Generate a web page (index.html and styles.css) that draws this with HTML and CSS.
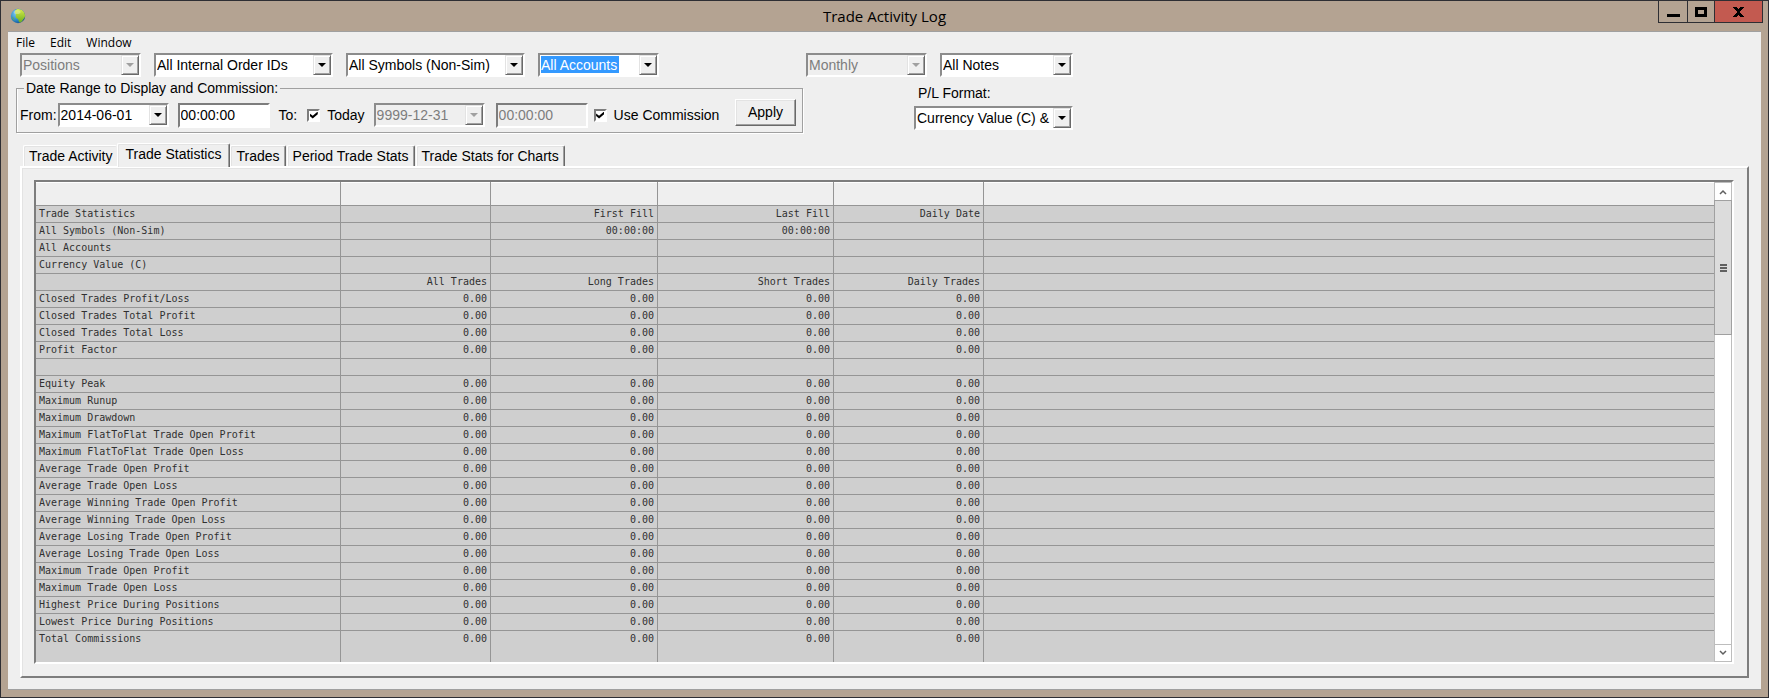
FILE: index.html
```
<!DOCTYPE html>
<html lang="en">
<head>
<meta charset="utf-8">
<title>Trade Activity Log</title>
<link rel="stylesheet" href="styles.css">
</head>
<body>
<div class="window">
  <header class="titlebar">
    <svg class="app-icon" width="16" height="16" viewBox="0 0 16 16" aria-hidden="true">
      <defs>
        <radialGradient id="sea" cx="0.35" cy="0.35" r="0.75">
          <stop offset="0" stop-color="#7cc8ee"/><stop offset="0.6" stop-color="#2a86c8"/><stop offset="1" stop-color="#164d86"/>
        </radialGradient>
        <linearGradient id="land" x1="0" y1="0" x2="0" y2="1">
          <stop offset="0" stop-color="#d6ea4a"/><stop offset="1" stop-color="#6fb01e"/>
        </linearGradient>
      </defs>
      <circle cx="8" cy="8" r="7.2" fill="url(#sea)"/>
      <path d="M7 1.2C11 .4 14.8 3.600 15.100 7.500C15.300 9.500 13.600 10.300 12.600 12.200C11.900 13.800 10.300 14.800 9.300 14C8.300 13.200 8.800 11.600 7.600 10.800C6.200 10 5.200 9 5.800 7.400C6.400 6 5 5.600 4.900 4.200C4.900 2.800 5.700 1.500 7 1.200Z" fill="url(#land)"/>
      <path d="M2.200 8.500C3.500 9.200 4.400 10.500 4.600 12.800C3.300 12 2.300 10.500 2.200 8.500Z" fill="#5fae5a"/>
      <ellipse cx="7" cy="4" rx="3.500" ry="2" fill="#fff" opacity="0.3"/>
    </svg>
    <h1 class="title">Trade Activity Log</h1>
    <div class="window-buttons">
      <button class="wb wb-min" type="button" aria-label="Minimize"><svg width="13" height="10" viewBox="0 0 13 10"><path d="M0 7h13v3H0z"/></svg></button>
      <button class="wb wb-max" type="button" aria-label="Maximize"><svg width="12" height="10" viewBox="0 0 12 10"><path fill-rule="evenodd" d="M0 0h12v10H0zM3 3v4h6V3z"/></svg></button>
      <button class="wb wb-close" type="button" aria-label="Close"><svg width="11" height="10" viewBox="0 0 11 10"><path d="M0 0h4v1h1v1h1V1h1V0h4v1h-1v1H9v1H8v1H7v2h1v1h1v1h1v1h1v1H7V9H6V8H5v1H4v1H0V9h1V8h1V7h1V6h1V4H3V3H2V2H1V1H0z"/></svg></button>
    </div>
  </header>
  <main class="client">
    <nav class="menu">
      <button type="button">File</button><button type="button">Edit</button><button type="button">Window</button>
    </nav>
    <section class="controls">
      <div class="controls-left">
        <div class="row filters">
          <span class="combo off w-s"><select aria-label="View" disabled><option>Positions</option></select><i></i></span>
          <span class="combo w-l"><select aria-label="Internal order IDs"><option>All Internal Order IDs</option></select><i></i></span>
          <span class="combo w-l"><select aria-label="Symbols"><option>All Symbols (Non-Sim)</option></select><i></i></span>
          <span class="combo selected w-s"><select aria-label="Accounts"><option>All Accounts</option></select><i></i></span>
        </div>
        <fieldset class="range">
          <legend>Date Range to Display and Commission:</legend>
          <div class="row range-row">
            <label for="from">From:</label>
            <span class="combo w-d"><select id="from"><option>2014-06-01</option></select><i></i></span>
            <input class="time" type="text" value="00:00:00" aria-label="From time">
            <label for="to">To:</label>
            <label class="check"><input type="checkbox" checked>Today</label>
            <span class="combo off w-d"><select id="to" disabled><option>9999-12-31</option></select><i></i></span>
            <input class="time" type="text" value="00:00:00" aria-label="To time" disabled>
            <label class="check commission"><input type="checkbox" checked>Use Commission</label>
            <button class="apply" type="button">Apply</button>
          </div>
        </fieldset>
      </div>
      <div class="controls-right">
        <div class="row">
          <span class="combo off w-s"><select aria-label="Period" disabled><option>Monthly</option></select><i></i></span>
          <span class="combo w-m"><select aria-label="Notes"><option>All Notes</option></select><i></i></span>
        </div>
        <div class="format">
          <label for="format">P/L Format:</label>
          <span class="combo"><select id="format"><option>Currency Value (C) &amp;</option></select><i></i></span>
        </div>
      </div>
    </section>
    <div class="tabs" role="tablist">
      <button class="tab" role="tab" type="button">Trade Activity</button>
      <button class="tab active" role="tab" type="button" aria-selected="true">Trade Statistics</button>
      <button class="tab" role="tab" type="button">Trades</button>
      <button class="tab" role="tab" type="button">Period Trade Stats</button>
      <button class="tab" role="tab" type="button">Trade Stats for Charts</button>
    </div>
    <section class="panel">
      <div class="grid-frame">
        <table class="stats">
          <colgroup><col class="c-name"><col class="c-all"><col class="c-long"><col class="c-short"><col class="c-all"><col></colgroup>
          <thead><tr><th></th><th></th><th></th><th></th><th></th><th></th></tr></thead>
          <tbody>
            <tr><td>Trade Statistics</td><td></td><td>First Fill</td><td>Last Fill</td><td>Daily Date</td><td></td></tr>
            <tr><td>All Symbols (Non-Sim)</td><td></td><td>00:00:00</td><td>00:00:00</td><td></td><td></td></tr>
            <tr><td>All Accounts</td><td></td><td></td><td></td><td></td><td></td></tr>
            <tr><td>Currency Value (C)</td><td></td><td></td><td></td><td></td><td></td></tr>
            <tr><td></td><td>All Trades</td><td>Long Trades</td><td>Short Trades</td><td>Daily Trades</td><td></td></tr>
            <tr><td>Closed Trades Profit/Loss</td><td>0.00</td><td>0.00</td><td>0.00</td><td>0.00</td><td></td></tr>
            <tr><td>Closed Trades Total Profit</td><td>0.00</td><td>0.00</td><td>0.00</td><td>0.00</td><td></td></tr>
            <tr><td>Closed Trades Total Loss</td><td>0.00</td><td>0.00</td><td>0.00</td><td>0.00</td><td></td></tr>
            <tr><td>Profit Factor</td><td>0.00</td><td>0.00</td><td>0.00</td><td>0.00</td><td></td></tr>
            <tr><td></td><td></td><td></td><td></td><td></td><td></td></tr>
            <tr><td>Equity Peak</td><td>0.00</td><td>0.00</td><td>0.00</td><td>0.00</td><td></td></tr>
            <tr><td>Maximum Runup</td><td>0.00</td><td>0.00</td><td>0.00</td><td>0.00</td><td></td></tr>
            <tr><td>Maximum Drawdown</td><td>0.00</td><td>0.00</td><td>0.00</td><td>0.00</td><td></td></tr>
            <tr><td>Maximum FlatToFlat Trade Open Profit</td><td>0.00</td><td>0.00</td><td>0.00</td><td>0.00</td><td></td></tr>
            <tr><td>Maximum FlatToFlat Trade Open Loss</td><td>0.00</td><td>0.00</td><td>0.00</td><td>0.00</td><td></td></tr>
            <tr><td>Average Trade Open Profit</td><td>0.00</td><td>0.00</td><td>0.00</td><td>0.00</td><td></td></tr>
            <tr><td>Average Trade Open Loss</td><td>0.00</td><td>0.00</td><td>0.00</td><td>0.00</td><td></td></tr>
            <tr><td>Average Winning Trade Open Profit</td><td>0.00</td><td>0.00</td><td>0.00</td><td>0.00</td><td></td></tr>
            <tr><td>Average Winning Trade Open Loss</td><td>0.00</td><td>0.00</td><td>0.00</td><td>0.00</td><td></td></tr>
            <tr><td>Average Losing Trade Open Profit</td><td>0.00</td><td>0.00</td><td>0.00</td><td>0.00</td><td></td></tr>
            <tr><td>Average Losing Trade Open Loss</td><td>0.00</td><td>0.00</td><td>0.00</td><td>0.00</td><td></td></tr>
            <tr><td>Maximum Trade Open Profit</td><td>0.00</td><td>0.00</td><td>0.00</td><td>0.00</td><td></td></tr>
            <tr><td>Maximum Trade Open Loss</td><td>0.00</td><td>0.00</td><td>0.00</td><td>0.00</td><td></td></tr>
            <tr><td>Highest Price During Positions</td><td>0.00</td><td>0.00</td><td>0.00</td><td>0.00</td><td></td></tr>
            <tr><td>Lowest Price During Positions</td><td>0.00</td><td>0.00</td><td>0.00</td><td>0.00</td><td></td></tr>
            <tr class="last"><td>Total Commissions</td><td>0.00</td><td>0.00</td><td>0.00</td><td>0.00</td><td></td></tr>
          </tbody>
        </table>
        <div class="scrollbar">
          <button class="sb-arrow" type="button" aria-label="Scroll up"><svg width="8" height="6" viewBox="0 0 8 6"><path d="M1 5L4 2L7 5" fill="none" stroke="#606060" stroke-width="1.500"/></svg></button>
          <div class="sb-thumb"><svg width="7" height="8" viewBox="0 0 7 8"><path d="M0 0h7v2H0zM0 3h7v2H0zM0 6h7v2H0z" fill="#606060"/></svg></div>
          <button class="sb-arrow sb-down" type="button" aria-label="Scroll down"><svg width="8" height="6" viewBox="0 0 8 6"><path d="M1 1L4 4L7 1" fill="none" stroke="#606060" stroke-width="1.500"/></svg></button>
        </div>
      </div>
    </section>
  </main>
</div>
</body>
</html>
```
FILE: styles.css
```
* { box-sizing: border-box; }

body {
  margin: 0;
  font-family: "Liberation Sans", Arial, sans-serif;
  font-size: 14px;
  color: #000;
}

button, select, input { font: inherit; color: inherit; margin: 0; border-radius: 0; }

.window {
  display: flex;
  flex-direction: column;
  min-height: 100vh;
  padding: 0 7px 7px;
  border: 1px solid #2e2e33;
  background: #b4a392;
}

/* Title bar */
.titlebar {
  display: grid;
  grid-template-columns: 1fr auto 1fr;
  align-items: center;
  height: 30px;
}
.app-icon { margin-left: 2px; }
.title {
  margin: 0;
  font-family: "Open Sans", "Segoe UI", sans-serif;
  font-size: 15px;
  font-weight: 400;
}
.window-buttons {
  display: flex;
  justify-self: end;
  align-self: start;
  margin-right: -2px;
  margin-top: -1px;
}
.wb {
  display: flex;
  align-items: center;
  justify-content: center;
  height: 23px;
  padding: 0;
  border: 1px solid #2e2e33;
  border-right-width: 0;
  background: #b4a392;
}
.wb-min { width: 29px; }
.wb-max { width: 27px; }
.wb-close { width: 49px; border-right-width: 1px; background: #c35a50; }

/* Client area */
.client {
  display: flex;
  flex: 1;
  flex-direction: column;
  padding: 0 12px 11px 8px;
  border: 1px solid #a0a0a0;
  border-width: 1px 0;
  background: #efefef;
}

.menu {
  display: flex;
  gap: 15px;
  height: 21px;
}
.menu button {
  padding: 0;
  border: 0;
  background: none;
  font-family: "Open Sans", "Segoe UI", sans-serif;
  font-size: 12px;
}

.controls { display: flex; gap: 3px; }
.controls-left { width: 787px; }
.row { display: flex; gap: 13px; }
.filters { padding-left: 4px; }

/* Combo boxes */
.combo {
  display: flex;
  height: 24px;
  border: 2px solid;
  border-color: #8c8c8c #fff #fff #8c8c8c;
  background: #fff;
}
.combo select {
  flex: 1;
  min-width: 0;
  padding: 0 0 0 1px;
  border: 0;
  background: none;
  appearance: none;
  outline: none;
}
.combo i {
  display: flex;
  align-items: center;
  justify-content: center;
  width: 18px;
  border: 1px solid;
  border-color: #e3e3e3 #696969 #696969 #e3e3e3;
  box-shadow: inset 1px 1px #fff, inset -1px -1px #a0a0a0;
  background: #efefef;
}
.combo i::after {
  content: "";
  border: 4px solid transparent;
  border-top-color: #000;
  border-bottom-width: 0;
}
.combo.off { background: #efefef; }
.combo.off select { color: #7d7d7d; opacity: 1; }
.combo.off i::after { border-top-color: #a0a0a0; }
.combo.selected select {
  color: #fff;
  background: linear-gradient(#3399ff, #3399ff) 1px 1px / 78px 17px no-repeat;
}
.w-s { width: 121px; }
.w-m { width: 133px; }
.w-l { width: 179px; }
.w-d { width: 111px; }

/* Date range group */
.range {
  min-width: 0;
  margin: 2px 0 0;
  padding: 4px 6px 3px 3px;
  border: 1px solid #a0a0a0;
  box-shadow: 1px 1px #fff, inset 1px 0 #fff;
}
.range legend { margin-left: 4px; padding: 0 2px; line-height: 18px; }
.range-row { align-items: center; gap: 9px; height: 28px; }
.range-row > label { white-space: nowrap; }
.range-row > label:first-child { margin-right: -8px; }
.time {
  width: 92px;
  height: 25px;
  padding: 0 1px;
  border: 2px solid;
  border-color: #7d7d7d #fff #fff #7d7d7d;
  background: #fff;
}
.combo.off + .time { margin-left: 2px; }
.time:disabled { background: #efefef; color: #7d7d7d; }
.check { display: flex; align-items: center; gap: 7px; margin-left: 1px; }
.commission { margin-left: -3px; }
.check input {
  width: 13px;
  height: 13px;
  border: 2px solid;
  border-color: #7d7d7d #fff #fff #7d7d7d;
  background: #fff;
  appearance: none;
  display: grid;
  place-items: center;
}
.check input:checked::after {
  content: "";
  width: 8px;
  height: 7px;
  background: #000;
  clip-path: polygon(0 28%, 37% 62%, 100% 0, 100% 40%, 37% 100%, 0 66%);
}
.apply {
  width: 61px;
  height: 27px;
  margin: -6px 0 0 auto;
  padding: 0;
  border: 1px solid;
  border-color: #fff #696969 #696969 #fff;
  box-shadow: inset -1px -1px #a0a0a0, inset 1px 1px #e3e3e3;
  background: #efefef;
}

.controls-right { width: 267px; }
.format { display: grid; width: 159px; margin-left: auto; }
.format label { height: 29px; padding: 2px 0 0 4px; line-height: 28px; }

/* Tabs */
.tabs {
  display: flex;
  align-items: flex-end;
  height: 24px;
  margin-top: 9px;
  padding-left: 7px;
}
.tab {
  height: 21px;
  margin-right: 1px;
  padding: 0 5px;
  border: 1px solid;
  border-color: #fff #696969 transparent #fff;
  border-bottom: 0;
  border-radius: 2px 2px 0 0;
  box-shadow: inset -1px 0 #a0a0a0, inset 1px 1px #e3e3e3;
  background: #efefef;
  white-space: nowrap;
}
.tab:first-child { margin-right: 0; padding-right: 4px; border-right: 0; box-shadow: inset 1px 1px #e3e3e3; }
.tab.active { z-index: 1; height: 24px; margin: 0 0 -1px; padding: 0 8px 3px; }

.panel {
  flex: 1;
  display: flex;
  margin-left: 4px;
  padding: 12px 13px 12px 12px;
  border: 2px solid;
  border-color: #fff #7d7d7d #7d7d7d #fff;
  box-shadow: inset 1px 1px #e3e3e3;
}
.grid-frame {
  flex: 1;
  display: flex;
  min-width: 0;
  border: 2px solid;
  border-color: #7d7d7d #fff #fff #7d7d7d;
  background: #cfcfcf;
}

/* Statistics table */
.stats {
  flex: 1;
  width: 100%;
  border-spacing: 0;
  table-layout: fixed;
  font-family: "DejaVu Sans Mono", Consolas, monospace;
  font-size: 10px;
  line-height: 16px;
  color: #303030;
}
.c-name { width: 305px; }
.c-all { width: 150px; }
.c-long { width: 167px; }
.c-short { width: 176px; }
.stats th {
  height: 24px;
  padding: 0;
  border: 1px solid #959595;
  border-width: 0 1px 1px 0;
  background: #efefef;
  box-shadow: inset 0 1px #fff;
}
.stats td {
  height: 17px;
  padding: 0 3px;
  border: 1px solid #959595;
  border-width: 0 1px 1px 0;
  text-align: right;
  white-space: nowrap;
}
.stats td:first-child { text-align: left; }
.stats th:last-child, .stats td:last-child { border-right: 0; }
.stats .last td { height: 31px; border-bottom: 0; vertical-align: top; }

/* Scrollbar */
.scrollbar {
  display: flex;
  flex-direction: column;
  width: 18px;
  border: 1px solid #bdbdbd;
  background: #fff;
}
.sb-arrow {
  display: flex;
  align-items: center;
  justify-content: center;
  height: 17px;
  padding: 0;
  border: 0;
  background: #fff;
}
.sb-down { margin-top: auto; border-top: 1px solid #bdbdbd; }
.sb-thumb {
  display: flex;
  align-items: center;
  justify-content: center;
  height: 135px;
  margin: 0 -1px;
  border: 1px solid #a0a0a0;
  background: #dcdcdc;
}
```
